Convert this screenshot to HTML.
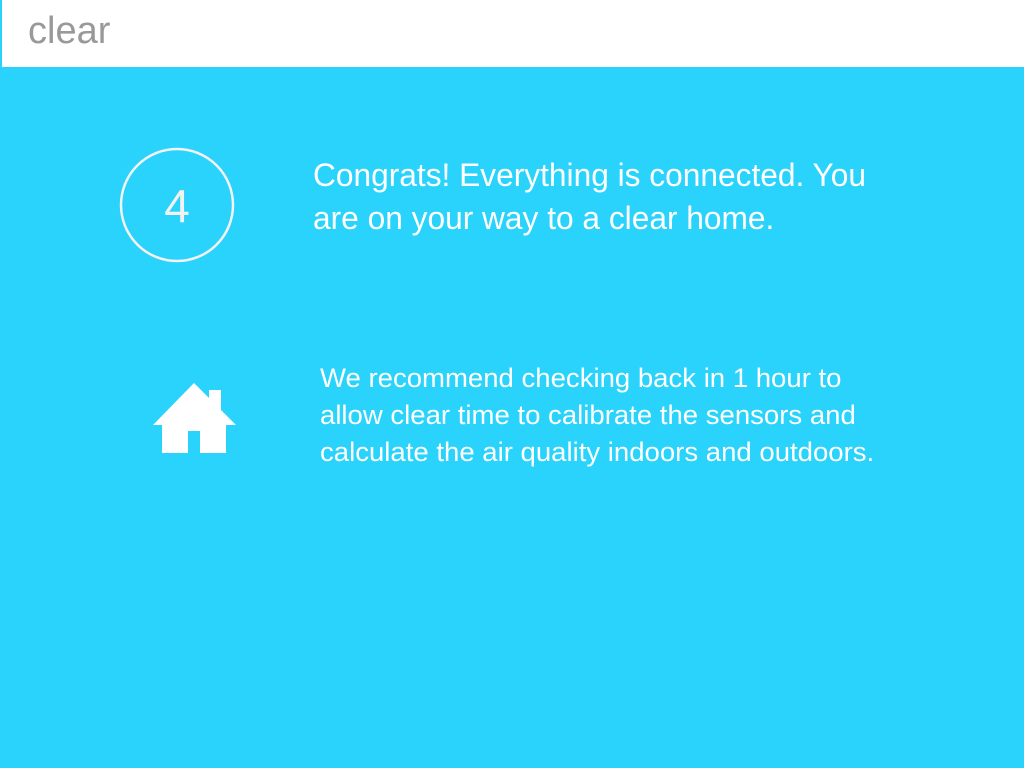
<!DOCTYPE html>
<html><head><style>
html,body{margin:0;padding:0;width:1024px;height:768px;overflow:hidden;background:#29d3fb;font-family:"Liberation Sans",sans-serif}
.hdr{position:absolute;left:0;top:0;width:1024px;height:67px;background:#fff;border-left:2px solid #29d3fb;box-sizing:border-box}
.logo{position:absolute;left:26px;top:10px;font-size:38px;color:#999;letter-spacing:0px}
.l{position:absolute;color:#fff;white-space:nowrap;transform-origin:0 0}
.t{font-size:32px;transform:scaleX(0.99)}
.b{font-size:27px;transform:scaleX(1.02)}
</style></head><body>
<div class="hdr"><div class="logo">clear</div></div>
<svg style="position:absolute;left:0;top:0" width="1024" height="768">
<circle cx="177" cy="205" r="56" fill="none" stroke="#f2f2f2" stroke-width="2.5"/>
<text x="177" y="222" font-family="Liberation Sans" font-size="46" fill="#f2f2f2" text-anchor="middle">4</text>
<path fill="#fff" d="M194 383 L209 398 L209 390 L221 390 L221 410 L236 425 L226 425 L226 453 L200 453 L200 431 L188 431 L188 453 L162 453 L162 425 L153 425 Z"/>
</svg>
<div class="l t" style="left:313px;top:157px">Congrats! Everything is connected. You</div>
<div class="l t" style="left:313px;top:200px">are on your way to a clear home.</div>
<div class="l b" style="left:320px;top:363px">We recommend checking back in 1 hour to</div>
<div class="l b" style="left:320px;top:400px">allow clear time to calibrate the sensors and</div>
<div class="l b" style="left:320px;top:437px">calculate the air quality indoors and outdoors.</div>
</body></html>
